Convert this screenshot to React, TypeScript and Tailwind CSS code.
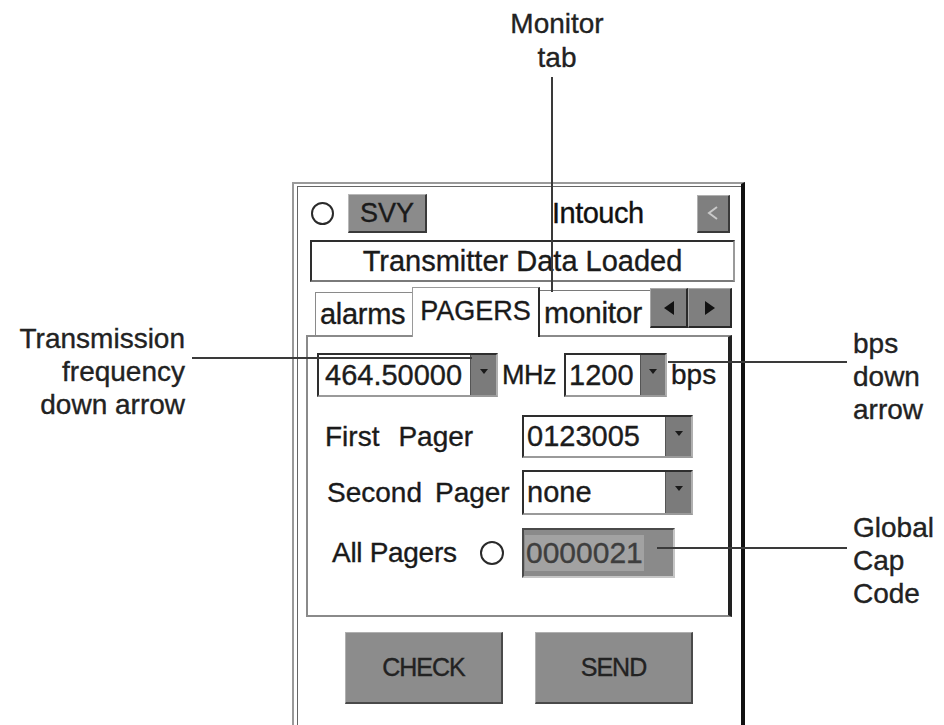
import React from 'react';

// Combo box with a grey drop-down strip on the right
function Combo({ text, width, height, arrow, padLeft }: { text: string; width: string; height: string; arrow: string; padLeft: string }) {
    return (
        <div className={`flex ${width} ${height} border-2 border-t-[#2e2e2e] border-l-[#2e2e2e] border-r-[#b0b0b0] border-b-[#9a9a9a] bg-white`}>
            <div className={`flex-1 flex items-center ${padLeft} text-[29px] leading-none text-[#1c1c1c] whitespace-nowrap overflow-hidden`}>
                {text}
            </div>
            <div className={`${arrow} h-full bg-[#7b7b7b] border-l border-[#555] flex justify-center pt-[14px]`}>
                <svg width="8" height="5" viewBox="0 0 8 5">
                    <polygon points="0,0 8,0 4,5" fill="#1a1a1a" />
                </svg>
            </div>
        </div>
    );
}

function Radio({ size }: { size: string }) {
    return <div className={`${size} shrink-0 rounded-full border-2 border-[#2a2a2a] bg-white`} />;
}

export default function App() {
    return (
        <div className="relative w-[944px] h-[725px] overflow-hidden bg-white font-['Liberation_Sans',Arial,sans-serif] text-[#1a1a1a] [-webkit-text-stroke:0.35px]">

            {/* -------------------- Device window -------------------- */}
            <div className="ml-[292px] mt-[182px] w-[453px] h-[600px] border-l-2 border-t-2 border-r-4 border-l-[#9a9a9a] border-t-[#9a9a9a] border-r-[#111] pl-[3px] pt-[2px]">
                <div className="h-full border-l border-t border-[#666] pl-[12px] pr-[6px]">

                    {/* Header */}
                    <div className="flex items-center h-[39px] mt-[7px]">
                        <div className="ml-[1px]"><Radio size="w-[23px] h-[23px]" /></div>
                        <div className="ml-[14px] w-[79px] h-[39px] bg-[#8b8b8b] border-t border-l border-[#b8b8b8] border-r-2 border-b-2 border-r-[#3a3a3a] border-b-[#3a3a3a] flex items-center justify-center text-[27px] leading-none text-[#1a1a1a]">
                            SVY
                        </div>
                        <div className="ml-[125px] text-[29px] leading-none tracking-[-0.5px] text-[#111]">Intouch</div>
                        <div className="ml-auto mr-[5px] w-[33px] h-[38px] bg-[#7f7f7f] border-t border-l border-[#b0b0b0] border-r-2 border-b-2 border-r-[#3a3a3a] border-b-[#3a3a3a] flex items-center justify-center">
                            <svg width="14" height="18" viewBox="0 0 14 18">
                                <polyline points="11,3 3,9 11,15" fill="none" stroke="#c9c9c9" strokeWidth="2" />
                            </svg>
                        </div>
                    </div>

                    {/* Status */}
                    <div className="mt-[7px] h-[42px] border-2 border-t-[#2e2e2e] border-l-[#2e2e2e] border-r-[#9a9a9a] border-b-[#7a7a7a] flex items-center justify-center text-[29px] leading-none text-[#1a1a1a] whitespace-nowrap">
                        Transmitter Data Loaded
                    </div>

                    {/* Tabs */}
                    <div className="mt-[5px] h-[48px] flex items-end">
                        <div className="ml-[5px] w-[97px] h-[43px] border-t border-l border-[#8a8a8a] flex items-center pl-[4px] text-[29px] leading-none tracking-[-0.3px]">
                            alarms
                        </div>
                        <div className="relative z-10 -mb-[2px] w-[128px] h-[50px] bg-white border-t border-l border-[#9a9a9a] border-r-2 border-r-[#2a2a2a] flex items-center justify-center pb-[2px] text-[27px] leading-none">
                            PAGERS
                        </div>
                        <div className="w-[110px] h-[45px] border-t border-[#7a7a7a] flex items-center pl-[4px] text-[30px] leading-none tracking-[-0.3px] overflow-hidden whitespace-nowrap">
                            monitor
                        </div>
                        <div className="self-start mt-[1px] w-[38px] h-[40px] bg-[#7f7f7f] border-t border-l border-[#a8a8a8] border-r-2 border-b-2 border-r-[#2a2a2a] border-b-[#2a2a2a] flex items-center justify-center">
                            <svg width="10" height="14" viewBox="0 0 10 14"><polygon points="10,0 10,14 0,7" fill="#111" /></svg>
                        </div>
                        <div className="self-start mt-[1px] w-[44px] h-[40px] bg-[#7f7f7f] border-t border-l border-[#a8a8a8] border-r-2 border-b-2 border-r-[#2a2a2a] border-b-[#2a2a2a] flex items-center justify-center">
                            <svg width="10" height="14" viewBox="0 0 10 14"><polygon points="0,0 0,14 10,7" fill="#111" /></svg>
                        </div>
                    </div>

                    {/* Panel */}
                    <div className="-ml-[4px] w-[426px] h-[282px] border-t-2 border-l-2 border-b-2 border-[#8a8a8a] border-r-4 border-r-[#222]">

                        {/* Frequency / bps */}
                        <div className="mt-[16px] flex items-center h-[44px]">
                            <div className="ml-[9px]">
                                <Combo text="464.50000" width="w-[181px]" height="h-[44px]" arrow="w-[26px]" padLeft="pl-[6px]" />
                            </div>
                            <div className="ml-[4px] text-[27px] leading-none tracking-[-0.5px]">MHz</div>
                            <div className="ml-[8px]">
                                <Combo text="1200" width="w-[103px]" height="h-[44px]" arrow="w-[25px]" padLeft="pl-[3px]" />
                            </div>
                            <div className="ml-[4px] text-[28px] leading-none">bps</div>
                        </div>

                        {/* First Pager */}
                        <div className="mt-[18px] flex items-center">
                            <div className="ml-[17px] w-[197px] text-[28px] leading-none">
                                First<span className="ml-[19px]">Pager</span>
                            </div>
                            <Combo text="0123005" width="w-[171px]" height="h-[43px]" arrow="w-[26px]" padLeft="pl-[3px]" />
                        </div>

                        {/* Second Pager */}
                        <div className="mt-[12px] flex items-center">
                            <div className="ml-[19px] w-[195px] text-[28px] leading-none whitespace-nowrap">
                                Second<span className="ml-[13px]">Pager</span>
                            </div>
                            <Combo text="none" width="w-[171px]" height="h-[45px]" arrow="w-[26px]" padLeft="pl-[3px]" />
                        </div>

                        {/* All Pagers */}
                        <div className="mt-[13px] flex items-center">
                            <div className="ml-[24px] w-[148px] text-[28px] leading-none tracking-[-0.3px]">All Pagers</div>
                            <Radio size="w-[24px] h-[24px]" />
                            <div className="ml-[18px] w-[153px] h-[50px] bg-[#8a8a8a] border-2 border-t-[#4a4a4a] border-l-[#4a4a4a] border-r-[#c6c6c6] border-b-[#c6c6c6] flex items-center pl-[1px]">
                                <span className="bg-[#a2a2a2] text-[#3e3e3e] text-[30px] leading-[36px] px-[1px]">0000021</span>
                            </div>
                        </div>
                    </div>

                    {/* Buttons */}
                    <div className="mt-[15px] flex">
                        <div className="ml-[35px] w-[158px] h-[72px] bg-[#8c8c8c] border-t border-l border-[#b0b0b0] border-r-2 border-b-2 border-r-[#4a4a4a] border-b-[#4a4a4a] flex items-center justify-center text-[25px] leading-none tracking-[-1px] text-[#222]">
                            CHECK
                        </div>
                        <div className="ml-[32px] w-[158px] h-[72px] bg-[#8c8c8c] border-t border-l border-[#b0b0b0] border-r-2 border-b-2 border-r-[#4a4a4a] border-b-[#4a4a4a] flex items-center justify-center text-[25px] leading-none tracking-[-1px] text-[#222]">
                            SEND
                        </div>
                    </div>
                </div>
            </div>

            {/* -------------------- Annotations -------------------- */}
            <div className="absolute left-[457px] top-[7px] w-[200px] text-center text-[28px] leading-[34px] text-[#222]">
                Monitor<br />tab
            </div>
            <div className="absolute left-[551px] top-[77px] w-[2px] h-[215px] bg-[#3a3a3a]" />

            <div className="absolute left-0 top-[322px] w-[185px] text-right text-[28px] leading-[33px] text-[#222]">
                Transmission<br />frequency<br />down arrow
            </div>
            <div className="absolute left-[192px] top-[357px] w-[280px] h-[2px] bg-[#3a3a3a]" />

            <div className="absolute left-[853px] top-[327px] text-[28px] leading-[33px] text-[#222]">
                bps<br />down<br />arrow
            </div>
            <div className="absolute left-[668px] top-[361px] w-[179px] h-[2px] bg-[#3a3a3a]" />

            <div className="absolute left-[853px] top-[511px] text-[28px] leading-[33px] text-[#222]">
                Global<br />Cap<br />Code
            </div>
            <div className="absolute left-[657px] top-[547px] w-[190px] h-[2px] bg-[#3a3a3a]" />
        </div>
    );
}
